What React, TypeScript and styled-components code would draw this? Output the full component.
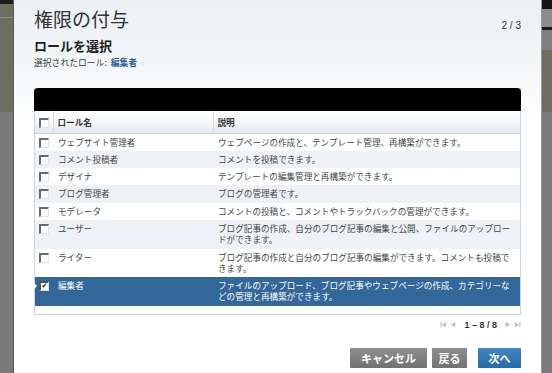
import React from 'react';
import styled, { createGlobalStyle } from 'styled-components';

interface Role {
  name: string;
  lines: string[];
  checked?: boolean;
}

const roles: Role[] = [
  { name: 'ウェブサイト管理者', lines: ['ウェブページの作成と、テンプレート管理、再構築ができます。'] },
  { name: 'コメント投稿者', lines: ['コメントを投稿できます。'] },
  { name: 'デザイナ', lines: ['テンプレートの編集管理と再構築ができます。'] },
  { name: 'ブログ管理者', lines: ['ブログの管理者です。'] },
  { name: 'モデレータ', lines: ['コメントの投稿と、コメントやトラックバックの管理ができます。'] },
  {
    name: 'ユーザー',
    lines: ['ブログ記事の作成、自分のブログ記事の編集と公開、ファイルのアップロー', 'ドができます。'],
  },
  {
    name: 'ライター',
    lines: ['ブログ記事の作成と自分のブログ記事の編集ができます。コメントも投稿で', 'きます。'],
  },
  {
    name: '編集者',
    lines: ['ファイルのアップロード、ブログ記事やウェブページの作成、カテゴリーな', 'どの管理と再構築ができます。'],
    checked: true,
  },
];

const GlobalStyle = createGlobalStyle`
  html, body {
    margin: 0;
    padding: 0;
    width: 552px;
    height: 373px;
    overflow: hidden;
  }
  body {
    font-family: "Noto Sans CJK JP", "Liberation Sans", sans-serif;
    color: #333;
  }
`;

const App: React.FC = (): JSX.Element => {
  return (
    <>
      <GlobalStyle />
      <Page>
        <LeftBackdrop />
        <Dialog>
          <TitleRow>
            <Title>権限の付与</Title>
            <Step>2 / 3</Step>
          </TitleRow>
          <Heading>ロールを選択</Heading>
          <Selected>
            選択されたロール:&nbsp;&nbsp;<SelectedName>編集者</SelectedName>
            <Remove>x</Remove>
          </Selected>

          <TableWrap>
            <BlackBar />
            <Table>
              <colgroup>
                <col style={{ width: 18 }} />
                <col style={{ width: 160 }} />
                <col />
              </colgroup>
              <thead>
                <tr>
                  <HeadCell>
                    <Check />
                  </HeadCell>
                  <HeadCell $divider>ロール名</HeadCell>
                  <HeadCell $divider>説明</HeadCell>
                </tr>
              </thead>
              <tbody>
                {roles.map((role, i) => (
                  <Row key={role.name} $alt={i % 2 === 1} $selected={!!role.checked}>
                    <CheckCell>
                      {role.checked && <Marker />}
                      <Check $checked={role.checked}>{role.checked ? '✔' : ''}</Check>
                    </CheckCell>
                    <Cell>{role.name}</Cell>
                    <Cell>
                      {role.lines.map((line) => (
                        <div key={line}>{line}</div>
                      ))}
                    </Cell>
                  </Row>
                ))}
              </tbody>
            </Table>
            <Filler />
          </TableWrap>

          <Pager>
            <PagerIcon viewBox="0 0 8 8">
              <rect x="0.5" y="1" width="1.3" height="6" />
              <path d="M7 1 L2.3 4 L7 7 Z" />
            </PagerIcon>
            <PagerIcon viewBox="0 0 8 8">
              <path d="M6 1 L1.3 4 L6 7 Z" />
            </PagerIcon>
            <PagerText>1 – 8 / 8</PagerText>
            <PagerIcon viewBox="0 0 8 8">
              <path d="M2 1 L6.7 4 L2 7 Z" />
            </PagerIcon>
            <PagerIcon viewBox="0 0 8 8">
              <path d="M1 1 L5.7 4 L1 7 Z" />
              <rect x="6.2" y="1" width="1.3" height="6" />
            </PagerIcon>
          </Pager>

          <Actions>
            <Button $w={77}>キャンセル</Button>
            <Button $w={35}>戻る</Button>
            <Button $w={43} $primary>
              次へ
            </Button>
          </Actions>
        </Dialog>
        <RightBackdrop />
      </Page>
    </>
  );
};

const Page = styled.div`
  display: flex;
  width: 552px;
  height: 373px;
`;

const LeftBackdrop = styled.div`
  width: 13px;
  flex: none;
  background: linear-gradient(
    to bottom,
    #1c1c1c 0,
    #1c1c1c 4px,
    #6d6e5f 4px,
    #6d6e5f 17px,
    #8a8b7a 17px,
    #8a8b7a 18px,
    #6d6e5f 18px,
    #6d6e5f 112px,
    #7a7a7a 112px
  );
  border-right: 1px solid #5a5a5a;
`;

const RightBackdrop = styled.div`
  width: 10px;
  flex: none;
  background: linear-gradient(
    to bottom,
    #151515 0,
    #151515 9px,
    #8c8c8c 9px,
    #8c8c8c 27px,
    #1a1a1a 27px,
    #1a1a1a 30px,
    #7e7e7e 30px,
    #7e7e7e 50px,
    #6d6e5f 50px,
    #6d6e5f 112px,
    #7b7b7b 112px
  );
  border-left: 1px solid #9a9a9a;
`;

const Dialog = styled.div`
  flex: 1;
  display: flex;
  flex-direction: column;
  padding: 6px 20px 0 20px;
  background: linear-gradient(to bottom, #ecf0f3 0, #f6f8f9 80px, #ffffff 120px);
`;

const TitleRow = styled.div`
  display: flex;
  justify-content: space-between;
  align-items: flex-end;
  height: 26px;
`;

const Title = styled.h1`
  margin: 0;
  font-size: 19px;
  font-weight: normal;
  line-height: 26px;
  color: #333;
`;

const Step = styled.span`
  font-family: "Liberation Sans", sans-serif;
  font-size: 10px;
  line-height: 12px;
  color: #333;
`;

const Heading = styled.h2`
  margin: 6px 0 0 0;
  font-size: 13px;
  font-weight: bold;
  line-height: 16px;
  color: #222;
`;

const Selected = styled.div`
  margin-top: 3px;
  font-size: 8.8px;
  line-height: 12px;
  color: #3a3a3a;
`;

const SelectedName = styled.span`
  color: #2a6496;
  font-weight: bold;
`;

const Remove = styled.span`
  margin-left: 3px;
  color: #d6dde3;
  font-family: "Liberation Sans", sans-serif;
  font-size: 8px;
`;

const TableWrap = styled.div`
  margin-top: 18px;
  border: 1px solid #c9d5e1;
  border-top: none;
  background: #fff;
`;

const BlackBar = styled.div`
  height: 23px;
  margin: 0 -1px;
  background: #000;
  border-radius: 4px 4px 0 0;
`;

const Table = styled.table`
  width: 100%;
  border-collapse: collapse;
  table-layout: fixed;
  font-size: 8.6px;
`;

const HeadCell = styled.th<{ $divider?: boolean }>`
  height: 22px;
  box-sizing: border-box;
  padding: 1px 4px 0 4px;
  text-align: left;
  font-weight: bold;
  line-height: 12px;
  color: #333;
  background: linear-gradient(to bottom, #ffffff 0, #f4f7fa 50%, #e3e9ef 100%);
  border-bottom: 1px solid #c9d3dd;
  border-left: ${(p) => (p.$divider ? '1px solid #d3dbe3' : 'none')};
  vertical-align: middle;
`;

const Row = styled.tr<{ $alt: boolean; $selected: boolean }>`
  background: ${(p) => (p.$selected ? '#336699' : p.$alt ? '#eef2f6' : '#ffffff')};
  color: ${(p) => (p.$selected ? '#ffffff' : '#444')};
`;

const Cell = styled.td`
  padding: 3px 4px 3px 5px;
  line-height: 11.3px;
  vertical-align: top;
  white-space: nowrap;
  overflow: hidden;
`;

const CheckCell = styled.td`
  position: relative;
  padding: 3px 0 0 4px;
  vertical-align: top;
`;

const Marker = styled.span`
  position: absolute;
  left: -1px;
  top: 6px;
  width: 0;
  height: 0;
  border-top: 3px solid transparent;
  border-bottom: 3px solid transparent;
  border-left: 3px solid #ffffff;
`;

const Check = styled.span<{ $checked?: boolean }>`
  display: block;
  box-sizing: border-box;
  width: 10px;
  height: 10px;
  margin-top: 1px;
  background: #fff;
  border-top: 2px solid #6b6b6b;
  border-left: 2px solid #6b6b6b;
  border-right: 1px solid #e4e4e4;
  border-bottom: 1px solid #e4e4e4;
  font-family: "DejaVu Sans", sans-serif;
  font-size: 7px;
  line-height: 7px;
  text-align: center;
  color: #111;
  ${(p) => p.$checked && 'border-color: #555 #ddd #ddd #555;'}
`;

const Filler = styled.div`
  height: 8px;
`;

const Pager = styled.div`
  display: flex;
  justify-content: flex-end;
  align-items: center;
  gap: 3px;
  margin-top: 3px;
  height: 14px;
`;

const PagerIcon = styled.svg`
  width: 7px;
  height: 7px;
  fill: #b8bec4;
`;

const PagerText = styled.span`
  margin: 0 4px;
  font-family: "Liberation Sans", sans-serif;
  font-size: 9px;
  font-weight: bold;
  color: #333;
`;

const Actions = styled.div`
  display: flex;
  justify-content: flex-end;
  gap: 5px;
  margin-top: 16px;
`;

const Button = styled.button<{ $primary?: boolean; $w: number }>`
  width: ${(p) => p.$w}px;
  height: 20px;
  padding: 0;
  border: none;
  border-radius: 1px;
  font-family: "Noto Sans CJK JP", sans-serif;
  font-size: 11px;
  font-weight: bold;
  line-height: 20px;
  color: #fff;
  background: ${(p) =>
    p.$primary
      ? 'linear-gradient(to bottom, #3f86c2 0, #2a6aa3 100%)'
      : 'linear-gradient(to bottom, #8e8e8e 0, #727272 100%)'};
  margin-left: ${(p) => (p.$primary ? '6px' : '0')};
  cursor: pointer;
`;

export default App;
